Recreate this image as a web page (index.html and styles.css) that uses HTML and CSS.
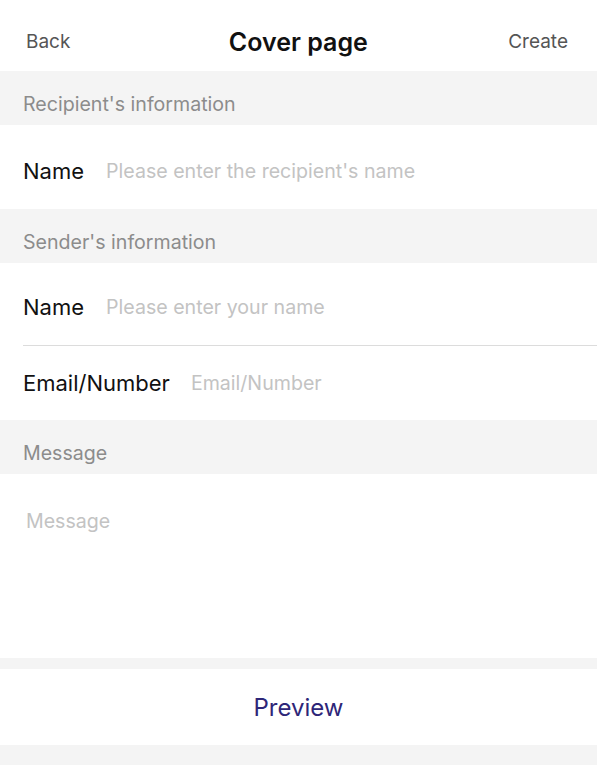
FILE: index.html
```html
<!DOCTYPE html>
<html>
<head>
<meta charset="utf-8">
<link rel="stylesheet" href="styles.css">
</head>
<body>
<div class="page">
  <header class="nav">
    <span class="nav-btn">Back</span>
    <span class="nav-title">Cover page</span>
    <span class="nav-btn">Create</span>
  </header>
  <div class="section-head">Recipient's information</div>
  <div class="group">
    <div class="row row-first"><span class="label">Name</span><span class="ph">Please enter the recipient's name</span></div>
  </div>
  <div class="section-head">Sender's information</div>
  <div class="group">
    <div class="row row-sep"><span class="label">Name</span><span class="ph">Please enter your name</span></div>
    <div class="row row-short"><span class="label">Email/Number</span><span class="ph">Email/Number</span></div>
  </div>
  <div class="section-head">Message</div>
  <div class="message"><span class="ph">Message</span></div>
  <div class="spacer"></div>
  <div class="preview">Preview</div>
</div>
</body>
</html>
```
FILE: styles.css
```css
html, body {
  margin: 0;
  padding: 0;
  background: #f4f4f4;
}
body {
  font-family: Inter, Roboto, "Liberation Sans", sans-serif;
  width: 597px;
  height: 765px;
  overflow: hidden;
}
.page {
  display: flex;
  flex-direction: column;
}
.nav {
  height: 71px;
  background: #fff;
  display: flex;
  align-items: center;
  justify-content: space-between;
  padding: 12px 29px 0 26px;
  box-sizing: border-box;
}
.nav-btn {
  font-size: 19px;
  color: #555;
}
.nav-title {
  font-size: 25px;
  font-weight: 600;
  color: #111;
  margin-left: 18px;
}
.section-head {
  height: 54px;
  display: flex;
  align-items: center;
  padding: 11px 0 0 23px;
  box-sizing: border-box;
  font-size: 19.6px;
  color: #8c8c8c;
}
.group {
  background: #fff;
}
.row {
  display: flex;
  align-items: center;
  height: 84px;
  margin-left: 23px;
  gap: 22px;
  box-sizing: border-box;
}
.row-first {
  padding-top: 8px;
}
.row-sep {
  height: 83px;
  padding-top: 6px;
  border-bottom: 1px solid #dcdcdc;
}
.row-short {
  height: 74px;
  gap: 21px;
}
.label {
  font-size: 22px;
  color: #111;
}
.ph {
  font-size: 19.6px;
  color: #c3c3c3;
}
.message {
  background: #fff;
  height: 184px;
  padding: 35px 0 0 26px;
  box-sizing: border-box;
}
.spacer {
  height: 11px;
}
.preview {
  height: 76px;
  background: #fff;
  display: flex;
  align-items: center;
  justify-content: center;
  font-size: 24px;
  color: #2e2678;
}
```
